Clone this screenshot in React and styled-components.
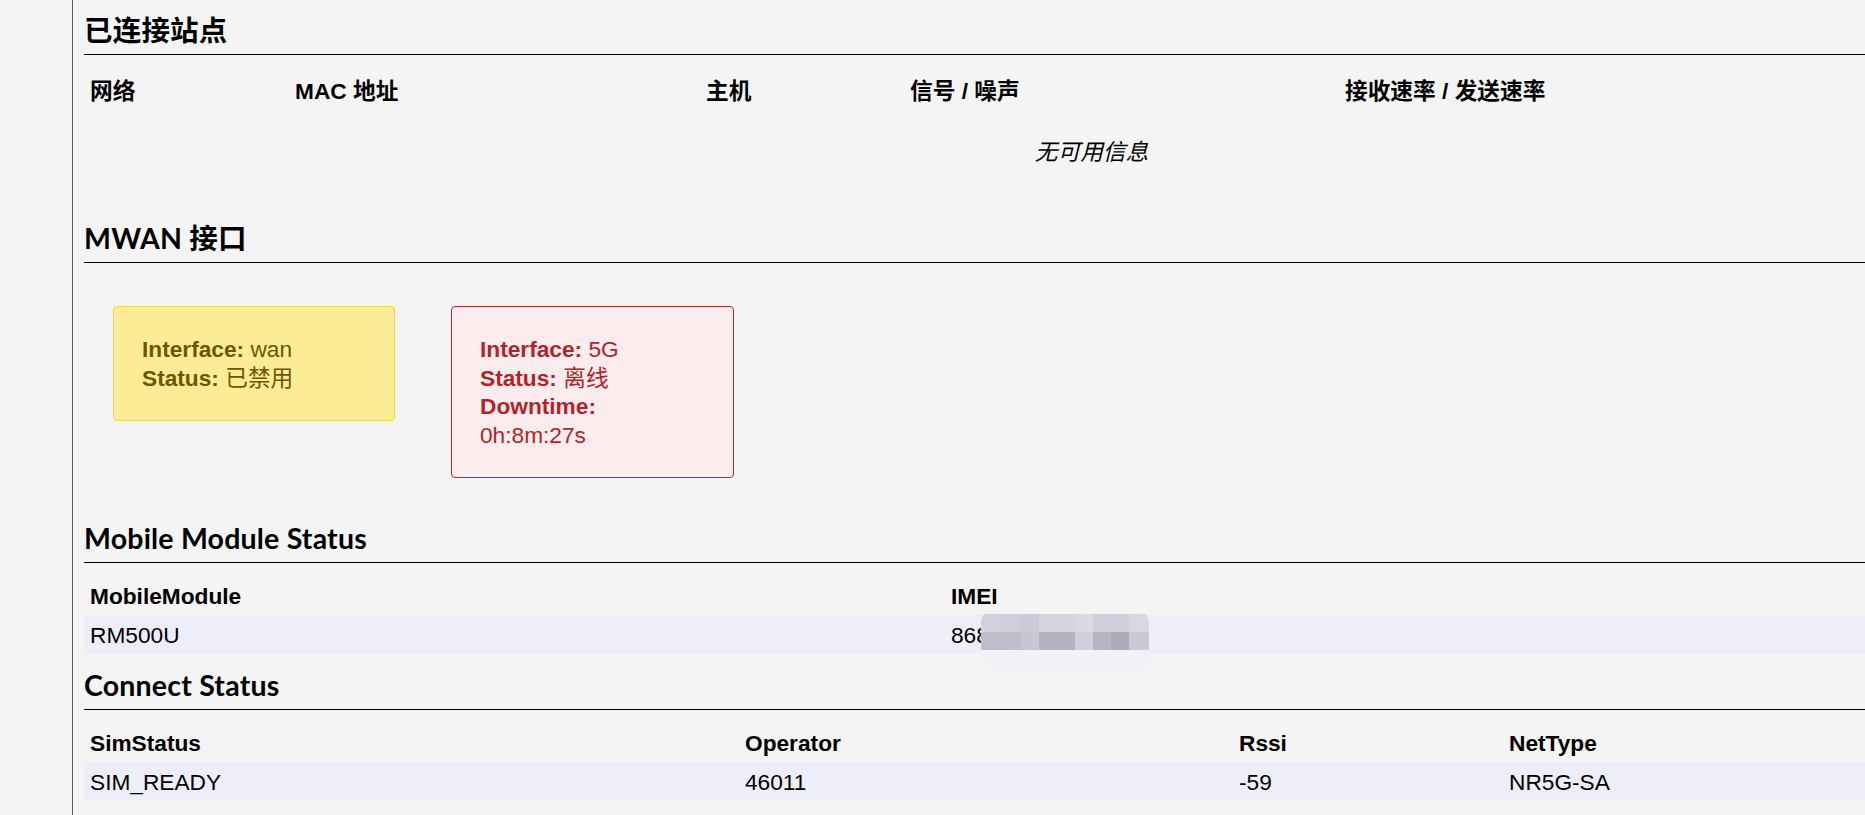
import React from 'react'
import styled, { createGlobalStyle } from 'styled-components'

const GlobalStyle = createGlobalStyle`
  html, body {
    margin: 0;
    padding: 0;
    background: #f4f4f4;
    overflow: hidden;
  }
  body {
    font-family: "Liberation Sans", Arial, "Noto Sans CJK SC", sans-serif;
    font-size: 22.7px;
    color: #000;
  }
`

const tones = {
  warn: { bg: '#fdec96', border: '#efd554', color: '#6a5800' },
  error: { bg: '#fdeced', border: '#b8292f', color: '#b0252a' },
}

const Page = styled.div`
  display: flex;
  width: 2110px;
  min-height: 815px;
`

const Sidebar = styled.div`
  flex: 0 0 72px;
  border-right: 1px solid #5a5a5a;
`

const Main = styled.main`
  width: 2015px;
  padding: 12px 0 0 11px;
`

const Heading = styled.h2`
  margin: ${(p) => p.$top || 0}px 0 0;
  padding: 1px 0 7px;
  border-bottom: 1px solid #000;
  font-family: Lato, "Noto Sans CJK SC", sans-serif;
  font-size: 28.5px;
  font-weight: 700;
  line-height: 34px;
  letter-spacing: 0.2px;
`

const Table = styled.div`
  display: grid;
  grid-template-columns: ${(p) => p.$cols};
  margin-top: 13px;
`

const Cell = styled.div`
  position: relative;
  display: flex;
  align-items: center;
  height: ${(p) => p.$h || 39}px;
  padding: 0 6px;
  line-height: 26px;
  font-weight: ${(p) => (p.$head ? 700 : 400)};
  background: ${(p) => (p.$band ? '#eeeefa' : 'transparent')};
  white-space: nowrap;
`

const EmptyCell = styled.div`
  grid-column: 1 / -1;
  display: flex;
  align-items: center;
  justify-content: center;
  height: 76px;
  font-style: italic;
  line-height: 26px;
`

const Cards = styled.div`
  display: flex;
  align-items: flex-start;
  gap: 56px;
  margin-top: 43px;
  padding-left: 29px;
`

const Card = styled.div`
  box-sizing: border-box;
  width: ${(p) => p.$w}px;
  padding: 27.8px 28px;
  border: 1px solid ${(p) => tones[p.$tone].border};
  border-radius: 4px;
  background: ${(p) => tones[p.$tone].bg};
  color: ${(p) => tones[p.$tone].color};
  line-height: 28.7px;
`

const Label = styled.strong`
  font-weight: 700;
`

const Mosaic = styled.svg`
  position: absolute;
  left: 36px;
  top: -4px;
`

const topRow = ['#d1d1dd', '#d0d0dc', '#cbcbd7', '#d4d4df', '#d4d4df', '#d9d9e3', '#cfcfdb', '#d0d0dc', '#d8d8e2']
const bottomRow = ['#bebeca', '#bfbfcb', '#c7c7d3', '#b4b4c0', '#b4b4c0', '#d0d0dc', '#b6b6c2', '#acacb8', '#c9c9d5']
const edges = [0, 22, 40, 58, 76, 94, 112, 130, 148, 168]

const Redaction = () => (
  <Mosaic width="168" height="57" viewBox="0 0 168 57">
    <defs>
      <clipPath id="blob">
        <rect x="0" y="0" width="168" height="57" rx="11" />
      </clipPath>
    </defs>
    <g clipPath="url(#blob)">
      <rect x="0" y="39" width="168" height="18" fill="#f1f1f6" />
      {topRow.map((c, i) => (
        <rect key={'t' + i} x={edges[i]} y="3" width={edges[i + 1] - edges[i]} height="18" fill={c} />
      ))}
      {bottomRow.map((c, i) => (
        <rect key={'b' + i} x={edges[i]} y="21" width={edges[i + 1] - edges[i]} height="18" fill={c} />
      ))}
    </g>
  </Mosaic>
)

const stationCols = ['网络', 'MAC 地址', '主机', '信号 / 噪声', '接收速率 / 发送速率']
const connectHead = ['SimStatus', 'Operator', 'Rssi', 'NetType']
const connectRow = ['SIM_READY', '46011', '-59', 'NR5G-SA']

export default function App() {
  return (
    <>
      <GlobalStyle />
      <Page>
        <Sidebar />
        <Main>
          <Heading>已连接站点</Heading>
          <Table $cols="205px 411px 204px 435px 1fr">
            {stationCols.map((t) => (
              <Cell key={t} $head $h={46}>{t}</Cell>
            ))}
            <EmptyCell>无可用信息</EmptyCell>
          </Table>

          <Heading $top={30}>MWAN 接口</Heading>
          <Cards>
            <Card $tone="warn" $w={282}>
              <Label>Interface:</Label> wan
              <br />
              <Label>Status:</Label> 已禁用
            </Card>
            <Card $tone="error" $w={283}>
              <Label>Interface:</Label> 5G
              <br />
              <Label>Status:</Label> 离线
              <br />
              <Label>Downtime:</Label>
              <br />
              0h:8m:27s
            </Card>
          </Cards>

          <Heading $top={42}>Mobile Module Status</Heading>
          <Table $cols="861px 1fr">
            <Cell $head>MobileModule</Cell>
            <Cell $head>IMEI</Cell>
            <Cell $band>RM500U</Cell>
            <Cell $band>
              868
              <Redaction />
            </Cell>
          </Table>

          <Heading $top={13}>Connect Status</Heading>
          <Table $cols="655px 494px 270px 1fr">
            {connectHead.map((t) => (
              <Cell key={t} $head>{t}</Cell>
            ))}
            {connectRow.map((t) => (
              <Cell key={t} $band>{t}</Cell>
            ))}
          </Table>
        </Main>
      </Page>
    </>
  )
}
